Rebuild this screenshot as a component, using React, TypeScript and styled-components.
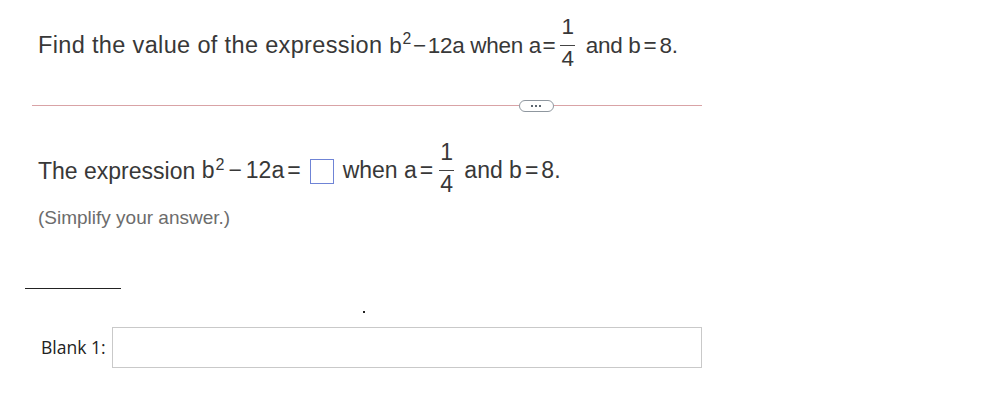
import React from 'react'
import styled, { createGlobalStyle } from 'styled-components'

const GlobalStyle = createGlobalStyle`
  html, body {
    margin: 0;
    padding: 0;
    background: #ffffff;
  }
`

const Page = styled.div`
  width: 994px;
  height: 410px;
  box-sizing: border-box;
  padding-top: 18px;
  display: flex;
  flex-direction: column;
`

const Statement = styled.div<{ $size: number; $raise: number }>`
  padding-left: 38px;
  font-family: 'Liberation Sans', Arial, sans-serif;
  font-size: ${({ $size }) => $size}px;
  line-height: 28px;
  color: #383838;
  white-space: nowrap;

  --raise: ${({ $raise }) => $raise}px;
`

const Run = styled.span<{ $spacing: number; $size?: number }>`
  letter-spacing: ${({ $spacing }) => $spacing}px;
  font-size: ${({ $size }) => ($size ? `${$size}px` : 'inherit')};
`

const Sup = styled.sup<{ $gap: number }>`
  font-size: 0.7em;
  line-height: 0;
  margin-left: ${({ $gap }) => $gap}px;
`

const Op = styled.span<{ $left: number; $right?: number }>`
  margin: 0 ${({ $left, $right }) => $right ?? $left}px 0 ${({ $left }) => $left}px;
`

const Fraction = styled.span<{ $left: number; $right: number }>`
  display: inline-flex;
  flex-direction: column;
  align-items: center;
  vertical-align: var(--raise);
  margin: 0 ${({ $right }) => $right}px 0 ${({ $left }) => $left}px;
  letter-spacing: 0;
`

const FracPart = styled.span`
  font-size: 1em;
  line-height: 0.83em;
`

const FracBar = styled.span`
  display: block;
  width: 0.64em;
  height: 1.5px;
  background: #444;
  margin: 8px 0 4px;
`

const Divider = styled.div`
  display: flex;
  align-items: center;
  width: 670px;
  margin: 31px 0 0 32px;
`

const Rule = styled.div<{ $grow: number }>`
  flex: ${({ $grow }) => $grow};
  height: 1px;
  background: #d9a3a6;
`

const MoreButton = styled.div`
  width: 33px;
  height: 10px;
  border: 1.5px solid #8f979f;
  border-radius: 6px;
  display: flex;
  align-items: center;
  justify-content: center;
  gap: 2px;
`

const Dot = styled.span`
  width: 2px;
  height: 2px;
  background: #5d6770;
`

const AnswerGroup = styled.div`
  margin-top: 31px;
`

const AnswerBox = styled.span`
  display: inline-block;
  box-sizing: border-box;
  width: 24px;
  height: 25px;
  border: 1.5px solid #6f84d6;
  margin: 0 9px 0 6px;
  vertical-align: -6px;
`

const Hint = styled.div`
  padding-left: 38px;
  font-family: 'Liberation Sans', Arial, sans-serif;
  font-size: 19px;
  line-height: 22px;
  color: #6c6c6c;
  margin-top: 12px;
`

const ShortRule = styled.div`
  width: 96px;
  height: 1px;
  background: #222;
  margin: 59px 0 0 25px;
`

const Mark = styled.div`
  width: 2px;
  height: 2px;
  background: #222;
  margin: 22px 0 0 363px;
`

const BlankRow = styled.div`
  display: flex;
  align-items: center;
  margin: 14px 0 0 41px;
  font-family: 'Open Sans', 'Noto Sans', sans-serif;
  font-size: 17.5px;
  color: #222;
`

const BlankLabel = styled.label`
  margin-right: 6px;
`

const BlankInput = styled.input`
  width: 590px;
  height: 41px;
  box-sizing: border-box;
  border: 1px solid #c9c9c9;
  background: #fff;
  outline: none;
  font: inherit;
`

const Frac = ({ num, den, left, right }: { num: string; den: string; left: number; right: number }) => (
  <Fraction $left={left} $right={right}>
    <FracPart>{num}</FracPart>
    <FracBar />
    <FracPart>{den}</FracPart>
  </Fraction>
)

export default function App() {
  return (
    <>
      <GlobalStyle />
      <Page>
        <Statement $size={23.5} $raise={18.5}>
          <Run $spacing={0.35}>Find the value of the expression </Run>
          <Run $spacing={-0.3} $size={22.5}>
            b<Sup $gap={1}>2</Sup>
            <Op $left={2}>−</Op>12a when a<Op $left={1.5} $right={2}>=</Op>
            <Frac num="1" den="4" left={3} right={5} /> and b<Op $left={3}>=</Op>8.
          </Run>
        </Statement>
        <Divider>
          <Rule $grow={486} />
          <MoreButton>
            <Dot />
            <Dot />
            <Dot />
          </MoreButton>
          <Rule $grow={148} />
        </Divider>
        <AnswerGroup>
          <Statement $size={23} $raise={18.5}>
            <Run $spacing={0}>The expression </Run>
            <Run $spacing={0}>
              b<Sup $gap={1}>2</Sup>
              <Op $left={4}>−</Op>12a<Op $left={3}>=</Op>
              <AnswerBox />
              when a<Op $left={3}>=</Op>
              <Frac num="1" den="4" left={3} right={4} /> and b<Op $left={3}>=</Op>8.
            </Run>
          </Statement>
        </AnswerGroup>
        <Hint>(Simplify your answer.)</Hint>
        <ShortRule />
        <Mark />
        <BlankRow>
          <BlankLabel>Blank 1:</BlankLabel>
          <BlankInput />
        </BlankRow>
      </Page>
    </>
  )
}
